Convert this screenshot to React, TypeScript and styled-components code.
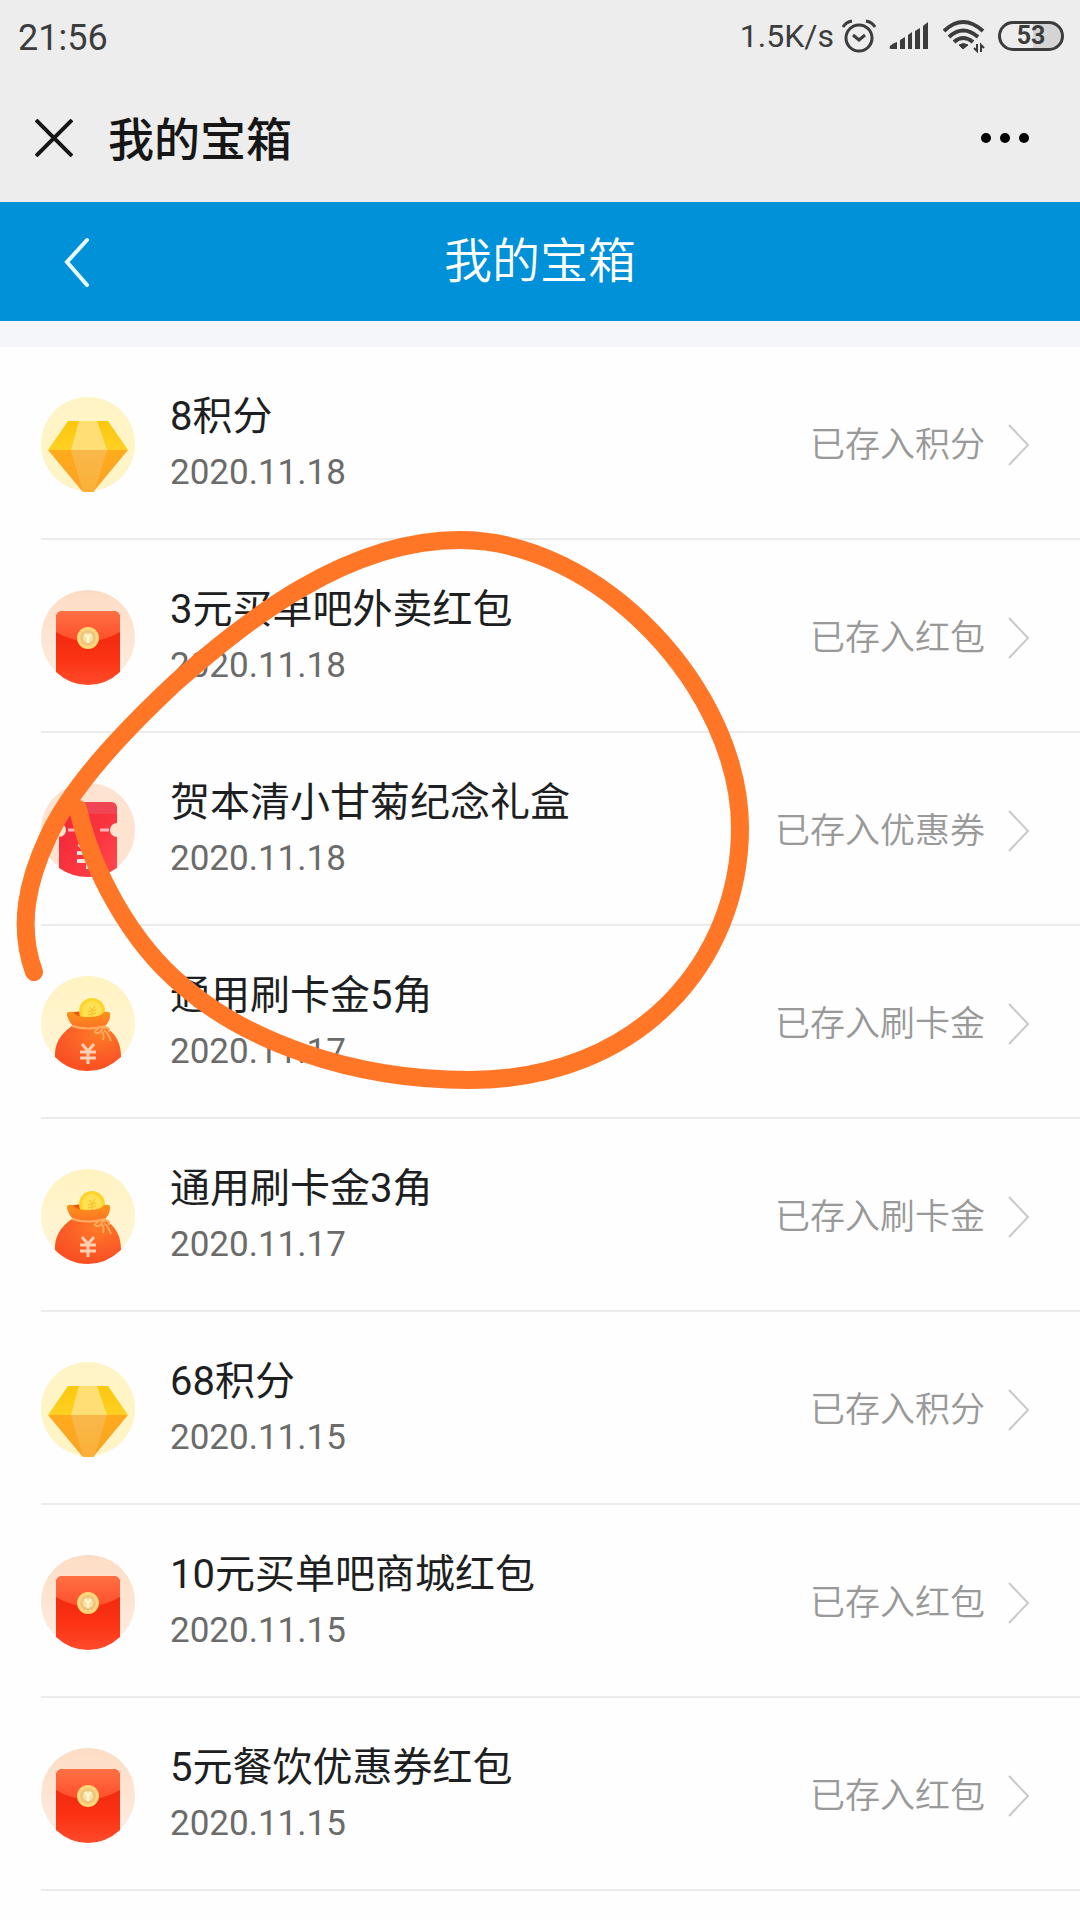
import React from 'react';
import styled, { createGlobalStyle } from 'styled-components';

const GlobalStyle = createGlobalStyle`
  *, *::before, *::after { box-sizing: border-box; }
  body {
    margin: 0;
    background: #fefefe;
    color: #1b1b1b;
    font-family: Roboto, "Noto Sans CJK SC", sans-serif;
  }
  svg { display: block; flex: none; }
`;

const Page = styled.div`
  position: relative;
  min-height: 100vh;
  overflow: hidden;
`;

const TopArea = styled.header`
  background: #ededed;
`;

const StatusBar = styled.div`
  display: flex;
  align-items: center;
  justify-content: space-between;
  height: 74px;
  padding: 2px 16px 0 18px;
  color: #3c3c3c;
  font-size: 36px;
  line-height: 72px;
`;

const StatusIcons = styled.div`
  display: flex;
  align-items: center;
  padding-bottom: 4px;
`;

const Speed = styled.span`
  margin-right: 8px;
  font-size: 32px;
`;

const IconSlot = styled.span<{ $gap: number }>`
  margin-right: ${(p) => p.$gap}px;
`;

const Battery = styled.span`
  display: flex;
  align-items: center;
  justify-content: center;
  width: 66px;
  height: 30px;
  border: 3px solid #3c3c3c;
  border-radius: 15px;
  background: linear-gradient(90deg, #ededed 53%, #d4d4d4 53%);
  font-size: 25px;
  font-weight: 700;
  line-height: 24px;
`;

const AppBar = styled.div`
  display: flex;
  align-items: center;
  height: 128px;
  padding: 0 50px 0 35px;
`;

const IconButton = styled.button`
  display: flex;
  padding: 0;
  border: 0;
  background: none;
  color: inherit;
  cursor: pointer;
`;

const AppTitle = styled.div`
  flex: 1;
  padding: 4px 0 0 35px;
  color: #161616;
  font-size: 46px;
  font-weight: 500;
  line-height: 64px;
`;

const NavBar = styled.nav`
  display: grid;
  grid-template-columns: 100px 1fr 100px;
  align-items: center;
  height: 119px;
  background: #0091d9;
  color: #fff;
`;

const BackButton = styled(IconButton)`
  justify-self: end;
  padding: 0 10px;
`;

const NavTitle = styled.h1`
  margin: 0;
  font-size: 48px;
  font-weight: 350;
  line-height: 64px;
  text-align: center;
`;

const List = styled.ul`
  margin: 0;
  padding: 0;
  border-top: 26px solid #f4f6fa;
  list-style: none;
`;

const Item = styled.li`
  margin-left: 41px;
  border-bottom: 2px solid #ebebeb;
`;

const RowLink = styled.a`
  display: flex;
  align-items: center;
  height: 191px;
  padding: 4px 50px 0 0;
  color: inherit;
  text-decoration: none;
`;

const Details = styled.div`
  flex: 1;
  padding-left: 35px;
  line-height: 56px;
`;

const Name = styled.div`
  color: #1d1f22;
  font-size: 40px;
  font-weight: 400;
`;

const DateText = styled.time`
  display: block;
  color: #6b6b6b;
  font-size: 35px;
`;

const State = styled.span`
  margin-right: 23px;
  padding-top: 2px;
  color: #999;
  font-size: 35px;
  font-weight: 350;
  line-height: 56px;
`;

const Scribble = styled.svg`
  position: absolute;
  top: 0;
  left: 0;
  pointer-events: none;
`;

const GemIcon = () => (
  <svg width="94" height="95" viewBox="0 0 94 95" aria-hidden="true">
    <defs>
      <linearGradient id="gemTop" x1="0" y1="0" x2="0" y2="1">
        <stop offset="0" stopColor="#fbc70e" />
        <stop offset="1" stopColor="#ffd023" />
      </linearGradient>
      <linearGradient id="gemLow" x1="0" y1="0" x2="0" y2="1">
        <stop offset="0" stopColor="#ffab1c" />
        <stop offset="1" stopColor="#f9a227" />
      </linearGradient>
      <linearGradient id="gemFace" x1="0" y1="0" x2="0" y2="1">
        <stop offset="0" stopColor="#f8b84a" />
        <stop offset="1" stopColor="#fbb038" />
      </linearGradient>
    </defs>
    <circle cx="47" cy="47" r="47" fill="#fff4c6" />
    <path d="M27 24H67L87 53H7Z" fill="url(#gemTop)" />
    <path d="M38 24H56L66 53H30Z" fill="#ffdf74" />
    <path d="M7 53H87L53 94Q52 95 50 95H44Q42 95 41 94Z" fill="url(#gemLow)" />
    <path d="M30 53H66L53 95H42Z" fill="url(#gemFace)" />
  </svg>
);

const PacketIcon = () => (
  <svg width="94" height="95" viewBox="0 0 94 95" aria-hidden="true">
    <defs>
      <linearGradient id="packetBg" x1="0" y1="0" x2="0" y2="1">
        <stop offset="0" stopColor="#fddcc4" />
        <stop offset="1" stopColor="#feeee2" />
      </linearGradient>
      <linearGradient id="packetBody" x1="0" y1="0" x2="0" y2="1">
        <stop offset="0.3" stopColor="#f32a10" />
        <stop offset="0.65" stopColor="#fb3312" />
        <stop offset="1" stopColor="#ff4b2b" />
      </linearGradient>
      <linearGradient id="packetFlap" x1="0" y1="0" x2="0" y2="1">
        <stop offset="0" stopColor="#ff7043" />
        <stop offset="1" stopColor="#ff4f2c" />
      </linearGradient>
    </defs>
    <circle cx="47" cy="47" r="47" fill="url(#packetBg)" />
    <path d="M15 28Q15 21 22 21H72Q79 21 79 28V82Q65 95 47 95Q29 95 15 82Z" fill="url(#packetBody)" />
    <path d="M15 28Q15 21 22 21H72Q79 21 79 28V42Q64 51 47 51Q29 51 15 42Z" fill="url(#packetFlap)" />
    <circle cx="47" cy="48" r="11" fill="#ffd878" />
    <circle cx="47" cy="48" r="8" fill="#efc680" />
    <circle cx="47" cy="48" r="5" fill="#fbe2a4" />
    <path d="M44 44L47 48L50 44M47 48V53" fill="none" stroke="#fff8dc" strokeWidth="2" />
  </svg>
);

const TicketIcon = () => (
  <svg width="94" height="95" viewBox="0 0 94 95" aria-hidden="true">
    <defs>
      <linearGradient id="ticketBody" x1="0" y1="0" x2="1" y2="1">
        <stop offset="0.2" stopColor="#f4293a" />
        <stop offset="0.6" stopColor="#fb3640" />
        <stop offset="1" stopColor="#ff4a4e" />
      </linearGradient>
    </defs>
    <circle cx="47" cy="47" r="47" fill="#fee3d0" />
    <path
      d="M18 26Q18 19 25 19H69Q76 19 76 26V40A7 7 0 0 0 76 54V85Q63 94 47 94Q31 94 18 85V54A7 7 0 0 0 18 40Z"
      fill="url(#ticketBody)"
    />
    <path d="M18 26Q18 19 25 19H69Q76 19 76 26V31H18Z" fill="#f04552" />
    <path d="M27 47H69" stroke="#ffb4b4" strokeWidth="3" strokeDasharray="9 7" />
    <path d="M38 61L47 70L56 61M36 70H58M36 78H58M47 70V86" fill="none" stroke="#ffe6dc" strokeWidth="4" />
  </svg>
);

const PurseIcon = () => (
  <svg width="94" height="95" viewBox="0 0 94 95" aria-hidden="true">
    <defs>
      <linearGradient id="purseBg" x1="0" y1="0" x2="0" y2="1">
        <stop offset="0" stopColor="#fff3c2" />
        <stop offset="1" stopColor="#fff5d8" />
      </linearGradient>
      <radialGradient id="purseBody" cx="0.65" cy="0.2" r="0.9">
        <stop offset="0" stopColor="#ff7b26" />
        <stop offset="0.6" stopColor="#fb5a26" />
        <stop offset="1" stopColor="#f94b1f" />
      </radialGradient>
      <linearGradient id="purseNeck" x1="0" y1="0" x2="0" y2="1">
        <stop offset="0" stopColor="#ff9418" />
        <stop offset="1" stopColor="#fb7226" />
      </linearGradient>
    </defs>
    <circle cx="47" cy="47" r="47" fill="url(#purseBg)" />
    <ellipse cx="47" cy="39" rx="21" ry="4" fill="#ea5612" />
    <circle cx="51" cy="35" r="13" fill="#ffd42a" />
    <circle cx="51" cy="35" r="10" fill="#ffe052" />
    <path d="M48 31L51 34L54 30M47 36L55 34M47 39L55 37M51 34V41" fill="none" stroke="#f3bd2c" strokeWidth="1" />
    <path d="M26 37Q28 35 32 36Q34 41 47 41Q60 41 63 36Q68 35 69 37Q70 44 64 50Q47 55 31 49Q26 43 26 37Z" fill="url(#purseNeck)" />
    <path d="M31 50Q47 56 64 51Q80 60 80 81Q65 95 47 95Q28 95 14 81Q13 62 31 50Z" fill="url(#purseBody)" />
    <path
      d="M31 50Q45 55 65 50M57 53Q50 57 58 57L62 52Q69 50 68 56M60 55Q64 58 62 64M63 54Q67 57 70 65"
      fill="none"
      stroke="#ffab5c"
      strokeWidth="2"
    />
    <path d="M41 68L47 75L53 68M39 76H55M39 82H55M47 75V88" fill="none" stroke="#ffd0b4" strokeWidth="3" />
  </svg>
);

const Chevron = () => (
  <svg width="22" height="42" viewBox="0 0 22 42" aria-hidden="true">
    <path d="M1 1L20 21L1 41" fill="none" stroke="#c9c9c9" strokeWidth="2" />
  </svg>
);

const AlarmIcon = () => (
  <svg width="34" height="34" viewBox="0 0 34 34" fill="none" stroke="#3c3c3c" strokeWidth="3" aria-hidden="true">
    <circle cx="17" cy="19" r="13" />
    <path d="M11 16L17 21L23 16" />
    <path d="M1 8Q4 3 10 2M33 8Q30 3 24 2" />
  </svg>
);

const SignalIcon = () => (
  <svg width="40" height="30" viewBox="0 0 40 30" fill="#3c3c3c" aria-hidden="true">
    <path d="M1 25Q4 22 8 21V28H2Q0 28 1 25Z" />
    <path d="M11 19L16 16V28H11Z" />
    <path d="M19 14L23 11V28H19Z" />
    <path d="M26 10L31 7V28H26Z" />
    <path d="M34 5L39 1V28H34Z" />
  </svg>
);

const WifiIcon = () => (
  <svg width="42" height="34" viewBox="0 0 42 34" fill="none" stroke="#3c3c3c" strokeWidth="4" aria-hidden="true">
    <path d="M1 12Q20 -6 40 12" />
    <path d="M6 18Q20 5 35 18" />
    <path d="M11 23Q20 15 30 23" />
    <path d="M20 30L16 26Q20 23 25 26Z" fill="#3c3c3c" strokeWidth="1" />
    <path d="M34 25V32L31 29M38 33V26L41 29" strokeWidth="2" />
  </svg>
);

/* The hand-drawn loop round the gift box row. */
const loop = [
  'M34 972',
  'C17 925 28 880 48 837',
  'C72 785 125 730 175 683',
  'C245 622 345 540 460 540',
  'C600 540 740 690 740 828',
  'C740 960 640 1080 469 1080',
  'C350 1080 245 1040 183 986',
  'C130 942 92 870 78 809',
].join('');

const icons = { gem: GemIcon, packet: PacketIcon, ticket: TicketIcon, purse: PurseIcon };

type Reward = { icon: keyof typeof icons; name: string; date: string; state: string };

const rewards: Reward[] = [
  { icon: 'gem', name: '8积分', date: '2020.11.18', state: '已存入积分' },
  { icon: 'packet', name: '3元买单吧外卖红包', date: '2020.11.18', state: '已存入红包' },
  { icon: 'ticket', name: '贺本清小甘菊纪念礼盒', date: '2020.11.18', state: '已存入优惠券' },
  { icon: 'purse', name: '通用刷卡金5角', date: '2020.11.17', state: '已存入刷卡金' },
  { icon: 'purse', name: '通用刷卡金3角', date: '2020.11.17', state: '已存入刷卡金' },
  { icon: 'gem', name: '68积分', date: '2020.11.15', state: '已存入积分' },
  { icon: 'packet', name: '10元买单吧商城红包', date: '2020.11.15', state: '已存入红包' },
  { icon: 'packet', name: '5元餐饮优惠券红包', date: '2020.11.15', state: '已存入红包' },
];

export default function App() {
  return (
    <Page lang="zh-CN">
      <GlobalStyle />
      <TopArea>
        <StatusBar>
          <span>21:56</span>
          <StatusIcons>
            <Speed>1.5K/s</Speed>
            <IconSlot $gap={13}><AlarmIcon /></IconSlot>
            <IconSlot $gap={14}><SignalIcon /></IconSlot>
            <IconSlot $gap={13}><WifiIcon /></IconSlot>
            <Battery>53</Battery>
          </StatusIcons>
        </StatusBar>
        <AppBar>
          <IconButton type="button" aria-label="关闭">
            <svg width="38" height="38" viewBox="0 0 38 38" aria-hidden="true">
              <path d="M1 1L37 37M37 1L1 37" stroke="#161616" strokeWidth="4" />
            </svg>
          </IconButton>
          <AppTitle>我的宝箱</AppTitle>
          <IconButton type="button" aria-label="更多">
            <svg width="50" height="10" viewBox="0 0 50 10" aria-hidden="true">
              <circle cx="6" cy="5" r="5" />
              <circle cx="25" cy="5" r="5" />
              <circle cx="44" cy="5" r="5" />
            </svg>
          </IconButton>
        </AppBar>
      </TopArea>
      <NavBar>
        <BackButton type="button" aria-label="返回">
          <svg width="26" height="50" viewBox="0 0 26 50" aria-hidden="true">
            <path d="M23 3L3 25L23 48" fill="none" stroke="#e9fbff" strokeWidth="4" strokeLinecap="round" />
          </svg>
        </BackButton>
        <NavTitle>我的宝箱</NavTitle>
      </NavBar>
      <List>
        {rewards.map((r, i) => {
          const Icon = icons[r.icon];
          return (
            <Item key={i}>
              <RowLink href="#">
                <Icon />
                <Details>
                  <Name>{r.name}</Name>
                  <DateText>{r.date}</DateText>
                </Details>
                <State>{r.state}</State>
                <Chevron />
              </RowLink>
            </Item>
          );
        })}
      </List>
      <Scribble width="780" height="1110" viewBox="0 0 780 1110" aria-hidden="true">
        <path d={loop} fill="none" stroke="#ff7626" strokeWidth="18" strokeLinecap="round" />
      </Scribble>
    </Page>
  );
}
